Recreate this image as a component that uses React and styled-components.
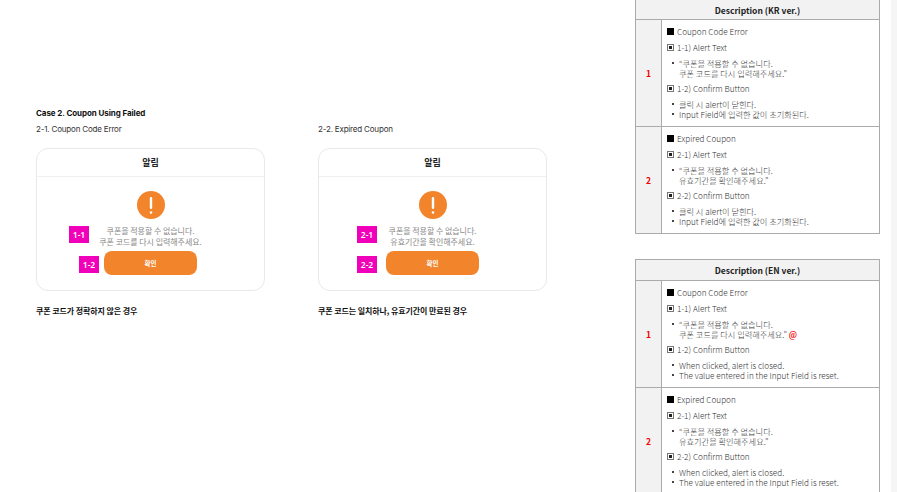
import React from "react";
import styled, { createGlobalStyle } from "styled-components";

const Global = createGlobalStyle`
  html, body { margin: 0; padding: 0; background: #fff; overflow: hidden; }
  body { width: 897px; height: 492px; font-family: "Inter", "Noto Sans CJK KR", sans-serif; }
`;
const Page = styled.div`
  width: 897px; height: 492px; display: flex; overflow: hidden; position: relative;
`;
const Canvas = styled.div`
  width: 635px; flex: none; padding: 108px 0 0 36px; box-sizing: border-box;
`;
const CaseTitle = styled.div`
  font: 700 8px/11px "Inter", "Noto Sans CJK KR", sans-serif; color: #111; height: 11px; letter-spacing: -0.08px;
`;
const Cases = styled.div`
  display: flex; gap: 53px; margin-top: 5px;
`;
const Case = styled.div`
  width: 229px; flex: none;
`;
const CaseLabel = styled.div`
  font: 400 8px/11px "Inter", "Noto Sans CJK KR", sans-serif; color: #333; height: 11px; margin-bottom: 13px; white-space: nowrap; letter-spacing: -0.18px;
`;
const Modal = styled.div`
  position: relative; width: 229px; height: 143px; box-sizing: border-box; border: 1px solid #e9e9ec; border-radius: 12px; background: #fff;
`;
const ModalHead = styled.div`
  height: 27px; border-bottom: 1px solid #f0f0f2; display: flex; align-items: center; justify-content: center;
  font: 700 9px/12px "Noto Sans CJK KR", sans-serif; color: #222;
`;
const ModalBody = styled.div`
  display: flex; flex-direction: column; align-items: center; padding-top: 14px;
`;
const Message = styled.div`
  margin-top: 7px; font: 400 8px/10.5px "Noto Sans CJK KR", sans-serif; color: #8a8a8a; text-align: center; white-space: nowrap; letter-spacing: -0.05px;
`;
const Confirm = styled.div`
  margin-top: 4px; width: 93px; height: 24px; border-radius: 8px; background: #f2842c; color: #fff;
  display: flex; align-items: center; justify-content: center; font: 700 6.5px/10px "Noto Sans CJK KR", sans-serif;
`;
const Badge = styled.div`
  position: absolute; left: ${p => p.$x}px; top: ${p => p.$y}px; width: 20px; height: 17px;
  background: #f000b8; color: #fff; display: flex; align-items: center; justify-content: center;
  font: 600 8.5px/10px "Noto Sans", sans-serif;
`;
const Caption = styled.div`
  margin-top: 14px; font: 700 8px/11px "Noto Sans CJK KR", sans-serif; color: #111; white-space: nowrap; letter-spacing: -0.1px;
`;
const Side = styled.div`
  width: 246px; flex: none; display: flex; flex-direction: column; gap: 25px; margin-top: -1px;
`;
const Table = styled.div`
  width: 245px; border: 1px solid #ababab; box-sizing: border-box; flex: none;
`;
const TableHead = styled.div`
  background: #f2f2f2; height: ${p => p.$h}px; border-bottom: 1px solid #ababab; display: flex; align-items: center; justify-content: center;
  font: 700 8.5px/12px "Noto Sans CJK KR", sans-serif; color: #222;
`;
const Row = styled.div`
  display: flex; height: ${p => p.$h}px; box-sizing: border-box;
  & + & { border-top: 1px solid #ababab; }
`;
const Num = styled.div`
  width: 25px; flex: none; background: #f2f2f2; border-right: 1px solid #ababab; display: flex; align-items: center; justify-content: center;
  font: 700 8.5px/12px "Noto Sans CJK KR", sans-serif; color: #f00000;
`;
const Cell = styled.div`
  flex: 1; padding: 5px 0 0 5px; font: 300 8.2px/10px "Noto Sans CJK KR", sans-serif; color: #333; min-width: 0;
`;
const Line = styled.div`
  display: flex; align-items: center; gap: 2px; height: 12px; margin-bottom: 4px; white-space: nowrap;
`;
const Solid = styled.span`
  width: 7px; height: 7px; background: #000; flex: none; margin-right: 1px;
`;
const Boxed = styled.span`
  width: 7px; height: 7px; box-sizing: border-box; border: 1px solid #777; flex: none; display: flex; align-items: center; justify-content: center; margin-right: 1px;
  &::after { content: ""; width: 3px; height: 3px; background: #222; }
`;
const Bullets = styled.ul`
  list-style: none; margin: 0 0 4px; padding: 1px 0 0 5px;
`;
const Bullet = styled.li`
  position: relative; padding-left: 7px; white-space: pre; height: 10px; line-height: 10px;
  &::before { content: ""; position: absolute; left: 0; top: 4px; width: 2px; height: 2px; background: #444; }
`;
const Cont = styled.div`
  padding-left: 7px; white-space: pre; height: 10px; line-height: 10px;
`;
const At = styled.span`
  color: #f01818; font-weight: 700;
`;
const Scroll = styled.div`
  position: absolute; right: 0; top: 0; width: 6px; height: 492px; background: #f5f5f5;
`;

function Alert({ label, lines, caption, badges }) {
  return (
    <Case>
      <CaseLabel>{label}</CaseLabel>
      <Modal>
        <ModalHead>알림</ModalHead>
        <ModalBody>
          <svg width="28" height="28" viewBox="0 0 28 28">
            <circle cx="14" cy="14" r="14" fill="#f2842c" />
            <rect x="12.8" y="6" width="2.4" height="12" rx="1.2" fill="#fff" />
            <circle cx="14" cy="21.5" r="1.3" fill="#fff" />
          </svg>
          <Message>{lines[0]}<br />{lines[1]}</Message>
          <Confirm>확인</Confirm>
        </ModalBody>
        {badges.map(b => <Badge key={b.t} $x={b.x} $y={b.y}>{b.t}</Badge>)}
      </Modal>
      <Caption>{caption}</Caption>
    </Case>
  );
}

function Desc({ n, title, lines, extra, l1, l2 }) {
  return (
    <Row $h={n === 1 ? 106 : 107}>
      <Num>{n}</Num>
      <Cell>
        <Line><Solid />{title}</Line>
        <Line><Boxed />{n}-1) Alert Text</Line>
        <Bullets>
          <Bullet>{lines[0]}</Bullet>
          <Cont>{lines[1]}{extra}</Cont>
        </Bullets>
        <Line><Boxed />{n}-2) Confirm Button</Line>
        <Bullets>
          <Bullet>{l1}</Bullet>
          <Bullet>{l2}</Bullet>
        </Bullets>
      </Cell>
    </Row>
  );
}

const m1 = ["“쿠폰을 적용할 수 없습니다.", "쿠폰 코드를 다시 입력해주세요.”"];
const m2 = ["“쿠폰을 적용할 수 없습니다.", "유효기간을 확인해주세요.”"];
const kr = ["클릭 시 alert이 닫힌다.", "Input Field에 입력한 값이 초기화된다."];
const en = ["When clicked, alert is closed.", "The value entered in the Input Field is reset."];

export default function App() {
  return (
    <Page>
      <Global />
      <Canvas>
        <CaseTitle>Case 2. Coupon Using Failed</CaseTitle>
        <Cases>
          <Alert
            label="2-1. Coupon Code Error"
            lines={["쿠폰을 적용할 수 없습니다.", "쿠폰 코드를 다시 입력해주세요."]}
            caption="쿠폰 코드가 정확하지 않은 경우"
            badges={[{ t: "1-1", x: 32, y: 77 }, { t: "1-2", x: 42, y: 107 }]}
          />
          <Alert
            label="2-2. Expired Coupon"
            lines={["쿠폰을 적용할 수 없습니다.", "유효기간을 확인해주세요."]}
            caption="쿠폰 코드는 일치하나, 유효기간이 만료된 경우"
            badges={[{ t: "2-1", x: 38, y: 77 }, { t: "2-2", x: 38, y: 107 }]}
          />
        </Cases>
      </Canvas>
      <Side>
        <Table>
          <TableHead $h={19}>Description (KR ver.)</TableHead>
          <Desc n={1} title="Coupon Code Error" lines={m1} l1={kr[0]} l2={kr[1]} />
          <Desc n={2} title="Expired Coupon" lines={m2} l1={kr[0]} l2={kr[1]} />
        </Table>
        <Table>
          <TableHead $h={20}>Description (EN ver.)</TableHead>
          <Desc n={1} title="Coupon Code Error" lines={m1} extra={<> <At>@</At></>} l1={en[0]} l2={en[1]} />
          <Desc n={2} title="Expired Coupon" lines={m2} l1={en[0]} l2={en[1]} />
        </Table>
      </Side>
      <Scroll />
    </Page>
  );
}
